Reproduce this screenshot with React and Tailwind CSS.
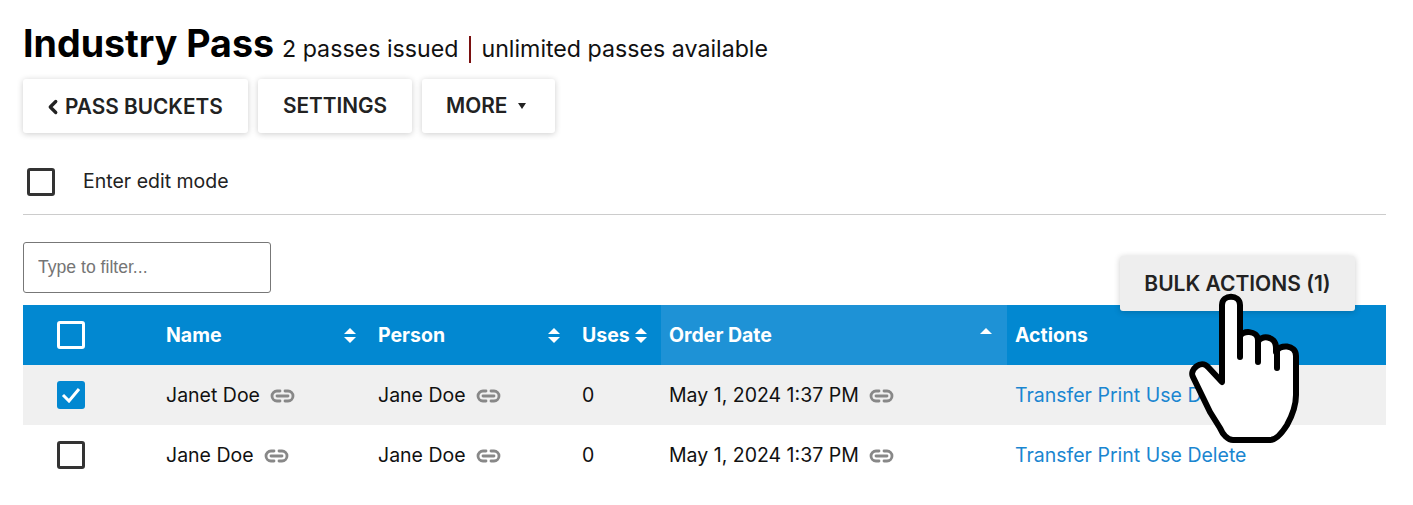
import React from "react";
import { ChevronLeft } from "lucide-react";

const LinkIcon = () => (
  <svg width="25" height="14" viewBox="0 0 25 14" fill="none" stroke="#888" strokeWidth="2.8" strokeLinecap="round" className="shrink-0 mt-[1px]">
    <path d="M10 2H7a5 5 0 0 0 0 10h3" />
    <path d="M15 2h3a5 5 0 0 1 0 10h-3" />
    <path d="M7 7h11" />
  </svg>
);

const SortIcon = ({ up = true, down = true }) => (
  <svg width="12" height="15" viewBox="0 0 12 15" fill="#fff" className="shrink-0">
    {up && <path d="M6 0l6 6H0z" />}
    {down && <path d="M0 9h12l-6 6z" />}
  </svg>
);

const Checkbox = ({ checked, light }) => {
  if (checked) {
    return (
      <div className="w-7 h-7 rounded-[3px] bg-[#0288d1] flex items-center justify-center">
        <svg width="20" height="16" viewBox="0 0 20 16" fill="none" stroke="#fff" strokeWidth="3">
          <path d="M2 8l6 6L18 2" />
        </svg>
      </div>
    );
  }
  return <div className={`w-7 h-7 rounded-[3px] border-[3px] ${light ? "border-white" : "border-[#333]"}`} />;
};

const Button = ({ children, className = "" }) => (
  <button className={`h-[54px] bg-white rounded-[3px] shadow-[0_1px_6px_rgba(0,0,0,0.2)] text-[20.8px] font-semibold text-[#222] flex items-center ${className}`}>
    {children}
  </button>
);

const columns = "grid grid-cols-[135px_212px_204px_87px_346px_379px]";

const rows = [
  { name: "Janet Doe", checked: true, bg: "bg-[#f0f0f0]" },
  { name: "Jane Doe", checked: false, bg: "bg-white" },
];

const HeaderCell = ({ label, sort, active, className = "pr-2" }) => (
  <div className={`flex items-center justify-between pl-2 ${className} ${active ? "bg-[#1e92d6]" : ""}`}>
    <span>{label}</span>
    {sort}
  </div>
);

export default function App() {
  return (
    <div className="relative min-h-[505px] bg-white pl-[23px] pr-[27px] pt-[19px] text-[19.5px] text-[#111] overflow-hidden" style={{ fontFamily: "Inter, 'Noto Sans', sans-serif" }}>
      <div className="flex items-baseline h-[50px]">
        <h1 className="text-[37.6px] leading-[50px] font-bold text-black">Industry Pass</h1>
        <span className="ml-[8px] text-[23.2px] text-[#111]">2 passes issued</span>
        <span className="mx-[11px] w-[2px] h-[27px] bg-[#7a1010] self-center mt-[10px]" />
        <span className="-ml-[1px] text-[23.2px] text-[#111]">unlimited passes available</span>
      </div>

      <div className="flex gap-[10px] mt-[10px]">
        <Button className="w-[225px] pl-[22px]">
          <ChevronLeft size={22} strokeWidth={3.6} className="-mx-[3px] mt-[1px]" />
          <span className="ml-[4px] mt-[1px]">PASS BUCKETS</span>
        </Button>
        <Button className="w-[154px] justify-center pb-[1px]">SETTINGS</Button>
        <Button className="w-[133px] pl-[24px] pb-[1px]">
          MORE
          <span className="ml-[11px] w-0 h-0 border-x-[4px] border-x-transparent border-t-[6px] border-t-[#222]" />
        </Button>
      </div>

      <div className="flex items-center mt-[34px] pl-[4px] pb-[18px] border-b border-[#ccc]">
        <div className="w-7 h-7 rounded-[3px] border-[3px] border-[#333]" />
        <span className="ml-[28px] text-[#222]">Enter edit mode</span>
      </div>

      <div className="flex justify-between items-start mt-[27px] h-[63px]">
        <input
          type="text"
          placeholder="Type to filter..."
          className="w-[248px] h-[51px] px-[14px] pb-[1px] text-[17.6px] border border-[#777] rounded-[3px] placeholder:text-[#757575]"
          style={{ fontFamily: "'Liberation Sans', Arial, sans-serif" }}
        />
        <button className="relative z-10 mt-[14px] mr-[31px] w-[235px] h-[55px] bg-[#eee] rounded-[3px] shadow-[0_1px_6px_rgba(0,0,0,0.2)] text-[21px] font-semibold text-[#222]">
          BULK ACTIONS (1)
        </button>
      </div>

      <div className={`${columns} h-[60px] bg-[#0288d1] text-white font-bold`}>
        <div className="flex items-center pl-[34px]">
          <Checkbox light />
        </div>
        <HeaderCell label="Name" sort={<SortIcon />} className="pr-[14px]" />
        <HeaderCell label="Person" sort={<SortIcon />} className="pr-[14px]" />
        <HeaderCell label="Uses" sort={<SortIcon />} className="pr-[14px]" />
        <HeaderCell label="Order Date" sort={<SortIcon down={false} />} active className="pr-[15px]" />
        <HeaderCell label="Actions" />
      </div>

      {rows.map((row) => (
        <div key={row.name} className={`${columns} h-[60px] ${row.bg}`}>
          <div className="flex items-center pl-[34px]">
            <Checkbox checked={row.checked} />
          </div>
          <div className="flex items-center gap-[10px] pl-2">
            {row.name} <LinkIcon />
          </div>
          <div className="flex items-center gap-[10px] pl-2">
            Jane Doe <LinkIcon />
          </div>
          <div className="flex items-center pl-2">0</div>
          <div className="flex items-center gap-[10px] pl-2">
            May 1, 2024 1:37 PM <LinkIcon />
          </div>
          <div className="flex items-center gap-[5.5px] pl-2 text-[#1a86d0]">
            <a>Transfer</a>
            <a>Print</a>
            <a>Use</a>
            <a>Delete</a>
          </div>
        </div>
      ))}

      {/* pointer overlay */}
      <svg className="absolute z-20 left-[1160px] top-[285px]" width="150" height="170" viewBox="60 40 150 170" fill="none">
        <path
          d="M122 137V60c0-11 18-11 18 0v32c1-7 18-7 18 3v2c2-7 18-7 18 6v4c3-8 20-8 20 4v39c0 12-4 21-9 30-5 8-11 15-17 15h-37c-5 0-10-5-13-12l-10-16-17-35c-4-7 8-18 15-10z"
          fill="#fff"
          stroke="#000"
          strokeWidth="6"
          strokeLinejoin="round"
        />
        <path d="M140 90v22M158 95v22M177 103v20" stroke="#000" strokeWidth="6" strokeLinecap="round" />
      </svg>
    </div>
  );
}
